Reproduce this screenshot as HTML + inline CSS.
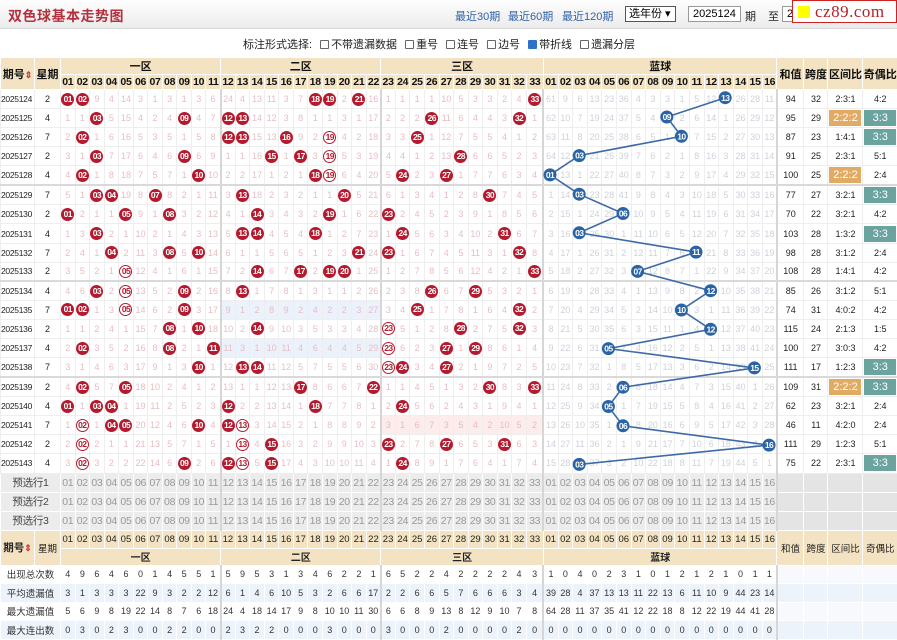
<!DOCTYPE html>
<html><head><meta charset="utf-8">
<style>
*{box-sizing:border-box}
body{margin:0;width:897px;height:640px;overflow:hidden;background:#fff;font-family:"Liberation Sans","Noto Sans CJK SC",sans-serif;position:relative}
#top{position:absolute;left:0;top:0;width:897px;height:29px;background:linear-gradient(#fdfdfd,#ececec);border-bottom:1px solid #d8d8d8}
#title{position:absolute;left:8px;top:6px;font-size:14px;font-weight:bold;color:#b5303c;letter-spacing:0.5px}
.lk{position:absolute;top:8px;font-size:11px;color:#2f62a8}
#sel{position:absolute;left:625px;top:6px;width:51px;height:16px;border:1px solid #555;font-size:11px;line-height:14px;padding-left:3px;background:#fff}
#inp{position:absolute;left:688px;top:6px;width:53px;height:16px;border:1px solid #999;font-size:11px;line-height:14px;padding-left:4px;background:#fff}
#inp2{position:absolute;left:782px;top:6px;width:30px;height:16px;border:1px solid #999;font-size:11px;line-height:14px;padding-left:4px;background:#fff}
.tx{position:absolute;top:8px;font-size:11px;color:#222}
#logo{position:absolute;left:792px;top:0;width:105px;height:23px;border:1px solid #c22;background:#fff}
#logo em{position:absolute;left:5px;top:5px;width:12px;height:12px;background:#ff0;display:block}
#logo span{position:absolute;left:22px;top:1px;font-family:"Liberation Serif",serif;font-size:17px;color:#b5202a;letter-spacing:0.5px}
#flt{position:absolute;left:243px;top:36px;font-size:11px;color:#222;white-space:nowrap}
#flt u{display:inline-block;width:9px;height:9px;border:1px solid #666;border-radius:1px;vertical-align:-1px;margin:0 2px 0 8px;text-decoration:none}
#flt u.c{background:#2d72c8;border-color:#2d72c8}
table{position:absolute;left:0;top:57px;border-collapse:collapse;table-layout:fixed;width:897px}
td{padding:0;text-align:center;font-size:9px;overflow:hidden;white-space:nowrap;border:1px solid #eee}
tr.h td{background:#f3e3c3;border:1px solid #fff;font-weight:bold;color:#111;font-size:11px}
tr.h1 td{height:14px}
tr.h2 td{height:15px;font-size:10.5px;letter-spacing:-0.3px}
tr.d td{height:19.1px;color:#e8bcc0}
tr.d td:nth-child(1){color:#222;text-align:left;padding-left:0;font-size:8.5px;letter-spacing:-0.3px}
tr.d td:nth-child(2){color:#222}
tr.d td:nth-child(n+14):nth-child(-n+24){color:#e6c0c4}
tr.d td:nth-child(n+36):nth-child(-n+51){color:#ccd2db}
tr.d td:nth-child(n+52){color:#222}
tr.d td:nth-child(13),tr.d td:nth-child(24),tr.d td:nth-child(35),tr.p td:nth-child(12),tr.p td:nth-child(23),tr.p td:nth-child(34),tr.s td:nth-child(12),tr.s td:nth-child(23),tr.s td:nth-child(34){border-right:2px solid #d6d6d6}
tr.d td:nth-child(51),tr.p td:nth-child(50),tr.s td:nth-child(50){border-right:2px solid #d6d6d6}
tr.d.b5 td{border-bottom:2px solid #d9d9d9}
tr.hb td:nth-child(n+14):nth-child(-n+24){background:#ebf2fb}
tr.hr td:nth-child(n+25):nth-child(-n+35){background:#fcecec}
b,i{display:inline-block;width:13px;height:13px;border-radius:50%;font-size:8.5px;line-height:13px;font-weight:bold;letter-spacing:-0.6px;font-style:normal;vertical-align:middle}
b{background:#b41a2e;color:#fff}
i{background:#fff;border:1px solid #b41a2e;color:#b41a2e;line-height:11px}
s{display:block;text-decoration:none;color:#fff;font-size:11px;margin:1px 1px;line-height:16px}
s.o{background:#e2ab63}
s.t{background:#6ba39f}
tr.p td{height:19px;background:#ececec;color:#999;border:1px solid #fff;font-size:10.5px;letter-spacing:-0.3px}
tr.p td:first-child{color:#444;font-size:10.5px}
tr.p td:nth-child(n+51){background:#e4e4e4}
tr.fh td{background:#f3e3c3;border:1px solid #fff;color:#222;font-size:9.5px}
tr.f1 td{height:18px}
tr.f2 td{height:17px;font-weight:bold;font-size:10px}
tr.s td{height:18.6px;color:#333;border:1px solid #fff;font-size:9px}
tr.s td:first-child{font-size:9.5px;color:#333}
tr.s.a td{background:#fff}
tr.s.l td{background:#edf3fb}
tr.s.a td:nth-child(n+51){background:#f7f9fc}
svg{position:absolute;left:0;top:0}
</style></head><body>
<div id="top">
<div id="title">双色球基本走势图</div>
<span class="lk" style="left:455px">最近30期</span>
<span class="lk" style="left:508px">最近60期</span>
<span class="lk" style="left:562px">最近120期</span>
<div id="sel">选年份 ▾</div>
<div id="inp">2025124</div>
<span class="tx" style="left:745px">期</span>
<span class="tx" style="left:768px">至</span>
<div id="inp2">2</div>
<div id="logo"><em></em><span>cz89.com</span></div>
</div>
<div id="flt">标注形式选择:<u></u>不带遗漏数据<u></u>重号<u></u>连号<u></u>边号<u class="c"></u>带折线<u></u>遗漏分层</div>

<table>
<colgroup><col style="width:34px"><col style="width:26px">
<col span="32" style="width:14.55px"><col style="width:17.05px">
<col span="16" style="width:14.6px">
<col style="width:27px"><col style="width:24px"><col style="width:35px"><col style="width:34.6px"></colgroup>
<tr class="h h1"><td rowspan="2">期号<span style="color:#c33;font-size:9px">⇕</span></td><td rowspan="2">星期</td><td colspan="11">一区</td><td colspan="11">二区</td><td colspan="11">三区</td><td colspan="16">蓝球</td><td rowspan="2">和值</td><td rowspan="2">跨度</td><td rowspan="2">区间比</td><td rowspan="2">奇偶比</td></tr>
<tr class="h h2"><td>01<td>02<td>03<td>04<td>05<td>06<td>07<td>08<td>09<td>10<td>11<td>12<td>13<td>14<td>15<td>16<td>17<td>18<td>19<td>20<td>21<td>22<td>23<td>24<td>25<td>26<td>27<td>28<td>29<td>30<td>31<td>32<td>33<td>01<td>02<td>03<td>04<td>05<td>06<td>07<td>08<td>09<td>10<td>11<td>12<td>13<td>14<td>15<td>16</tr>

<tr class="d"><td>2025124<td>2<td><b>01</b><td><b>02</b><td>9<td>4<td>14<td>3<td>1<td>3<td>1<td>3<td>6<td>24<td>4<td>13<td>11<td>3<td>7<td><b>18</b><td><b>19</b><td>2<td><b>21</b><td>16<td>1<td>1<td>1<td>1<td>10<td>5<td>3<td>3<td>2<td>4<td><b>33</b><td>61<td>9<td>6<td>13<td>23<td>36<td>4<td>3<td>3<td>1<td>5<td>12<td><td>26<td>28<td>11<td>94<td>32<td>2:3:1<td>4:2</tr>
<tr class="d"><td>2025125<td>4<td>1<td>1<td><b>03</b><td>5<td>15<td>4<td>2<td>4<td><b>09</b><td>4<td>7<td><b>12</b><td><b>13</b><td>14<td>12<td>3<td>8<td>1<td>1<td>3<td>1<td>17<td>2<td>2<td>2<td><b>26</b><td>11<td>6<td>4<td>4<td>3<td><b>32</b><td>1<td>62<td>10<td>7<td>19<td>24<td>37<td>5<td>4<td><td>2<td>6<td>14<td>1<td>26<td>29<td>12<td>95<td>29<td><s class="o">2:2:2</s><td><s class="t">3:3</s></tr>
<tr class="d"><td>2025126<td>7<td>2<td><b>02</b><td>1<td>6<td>16<td>5<td>3<td>5<td>1<td>5<td>8<td><b>12</b><td><b>13</b><td>15<td>13<td><b>16</b><td>9<td>2<td><i>19</i><td>4<td>2<td>18<td>3<td>3<td><b>25</b><td>1<td>12<td>7<td>5<td>5<td>4<td>1<td>2<td>63<td>11<td>8<td>20<td>25<td>38<td>6<td>5<td>1<td><td>7<td>15<td>2<td>27<td>30<td>13<td>87<td>23<td>1:4:1<td><s class="t">3:3</s></tr>
<tr class="d"><td>2025127<td>2<td>3<td>1<td><b>03</b><td>7<td>17<td>6<td>4<td>6<td><b>09</b><td>6<td>9<td>1<td>1<td>16<td><b>15</b><td>1<td><b>17</b><td>3<td><i>19</i><td>5<td>3<td>19<td>4<td>4<td>1<td>2<td>13<td><b>28</b><td>6<td>6<td>5<td>2<td>3<td>64<td>12<td><td>21<td>26<td>39<td>7<td>6<td>2<td>1<td>8<td>16<td>3<td>28<td>31<td>14<td>91<td>25<td>2:3:1<td>5:1</tr>
<tr class="d b5"><td>2025128<td>4<td>4<td><b>02</b><td>1<td>8<td>18<td>7<td>5<td>7<td>1<td><b>10</b><td>10<td>2<td>2<td>17<td>1<td>2<td>1<td><b>18</b><td><i>19</i><td>6<td>4<td>20<td>5<td><b>24</b><td>2<td>3<td><b>27</b><td>1<td>7<td>7<td>6<td>3<td>4<td><td>13<td>1<td>22<td>27<td>40<td>8<td>7<td>3<td>2<td>9<td>17<td>4<td>29<td>32<td>15<td>100<td>25<td><s class="o">2:2:2</s><td>2:4</tr>
<tr class="d"><td>2025129<td>7<td>5<td>1<td><b>03</b><td><b>04</b><td>19<td>8<td><b>07</b><td>8<td>2<td>1<td>11<td>3<td><b>13</b><td>18<td>2<td>3<td>2<td>1<td>1<td><b>20</b><td>5<td>21<td>6<td>1<td>3<td>4<td>1<td>2<td>8<td><b>30</b><td>7<td>4<td>5<td>1<td>14<td><td>23<td>28<td>41<td>9<td>8<td>4<td>3<td>10<td>18<td>5<td>30<td>33<td>16<td>77<td>27<td>3:2:1<td><s class="t">3:3</s></tr>
<tr class="d"><td>2025130<td>2<td><b>01</b><td>2<td>1<td>1<td><b>05</b><td>9<td>1<td><b>08</b><td>3<td>2<td>12<td>4<td>1<td><b>14</b><td>3<td>4<td>3<td>2<td><b>19</b><td>1<td>6<td>22<td><b>23</b><td>2<td>4<td>5<td>2<td>3<td>9<td>1<td>8<td>5<td>6<td>2<td>15<td>1<td>24<td>29<td><td>10<td>9<td>5<td>4<td>11<td>19<td>6<td>31<td>34<td>17<td>70<td>22<td>3:2:1<td>4:2</tr>
<tr class="d"><td>2025131<td>4<td>1<td>3<td><b>03</b><td>2<td>1<td>10<td>2<td>1<td>4<td>3<td>13<td>5<td><b>13</b><td><b>14</b><td>4<td>5<td>4<td><b>18</b><td>1<td>2<td>7<td>23<td>1<td><b>24</b><td>5<td>6<td>3<td>4<td>10<td>2<td><b>31</b><td>6<td>7<td>3<td>16<td><td>25<td>30<td>1<td>11<td>10<td>6<td>5<td>12<td>20<td>7<td>32<td>35<td>18<td>103<td>28<td>1:3:2<td><s class="t">3:3</s></tr>
<tr class="d"><td>2025132<td>7<td>2<td>4<td>1<td><b>04</b><td>2<td>11<td>3<td><b>08</b><td>5<td><b>10</b><td>14<td>6<td>1<td>1<td>5<td>6<td>5<td>1<td>2<td>3<td><b>21</b><td>24<td><b>23</b><td>1<td>6<td>7<td>4<td>5<td>11<td>3<td>1<td><b>32</b><td>8<td>4<td>17<td>1<td>26<td>31<td>2<td>12<td>11<td>7<td>6<td><td>21<td>8<td>33<td>36<td>19<td>98<td>28<td>3:1:2<td>2:4</tr>
<tr class="d b5"><td>2025133<td>2<td>3<td>5<td>2<td>1<td><i>05</i><td>12<td>4<td>1<td>6<td>1<td>15<td>7<td>2<td><b>14</b><td>6<td>7<td><b>17</b><td>2<td><b>19</b><td><b>20</b><td>1<td>25<td>1<td>2<td>7<td>8<td>5<td>6<td>12<td>4<td>2<td>1<td><b>33</b><td>5<td>18<td>2<td>27<td>32<td>3<td><td>12<td>8<td>7<td>1<td>22<td>9<td>34<td>37<td>20<td>108<td>28<td>1:4:1<td>4:2</tr>
<tr class="d"><td>2025134<td>4<td>4<td>6<td><b>03</b><td>2<td><i>05</i><td>13<td>5<td>2<td><b>09</b><td>2<td>16<td>8<td><b>13</b><td>1<td>7<td>8<td>1<td>3<td>1<td>1<td>2<td>26<td>2<td>3<td>8<td><b>26</b><td>6<td>7<td><b>29</b><td>5<td>3<td>2<td>1<td>6<td>19<td>3<td>28<td>33<td>4<td>1<td>13<td>9<td>8<td>2<td><td>10<td>35<td>38<td>21<td>85<td>26<td>3:1:2<td>5:1</tr>
<tr class="d hb"><td>2025135<td>7<td><b>01</b><td><b>02</b><td>1<td>3<td><i>05</i><td>14<td>6<td>2<td><b>09</b><td>3<td>17<td>9<td>1<td>2<td>8<td>9<td>2<td>4<td>2<td>2<td>3<td>27<td>3<td>4<td><b>25</b><td>1<td>7<td>8<td>1<td>6<td>4<td><b>32</b><td>2<td>7<td>20<td>4<td>29<td>34<td>5<td>2<td>14<td>10<td><td>3<td>1<td>11<td>36<td>39<td>22<td>74<td>31<td>4:0:2<td>4:2</tr>
<tr class="d"><td>2025136<td>2<td>1<td>1<td>2<td>4<td>1<td>15<td>7<td><b>08</b><td>1<td><b>10</b><td>18<td>10<td>2<td><b>14</b><td>9<td>10<td>3<td>5<td>3<td>3<td>4<td>28<td><i>23</i><td>5<td>1<td>2<td>8<td><b>28</b><td>2<td>7<td>5<td><b>32</b><td>3<td>8<td>21<td>5<td>30<td>35<td>6<td>3<td>15<td>11<td>1<td>4<td><td>12<td>37<td>40<td>23<td>115<td>24<td>2:1:3<td>1:5</tr>
<tr class="d hb"><td>2025137<td>4<td>2<td><b>02</b><td>3<td>5<td>2<td>16<td>8<td><b>08</b><td>2<td>1<td><b>11</b><td>11<td>3<td>1<td>10<td>11<td>4<td>6<td>4<td>4<td>5<td>29<td><i>23</i><td>6<td>2<td>3<td><b>27</b><td>1<td><b>29</b><td>8<td>6<td>1<td>4<td>9<td>22<td>6<td>31<td><td>7<td>4<td>16<td>12<td>2<td>5<td>1<td>13<td>38<td>41<td>24<td>100<td>27<td>3:0:3<td>4:2</tr>
<tr class="d b5"><td>2025138<td>7<td>3<td>1<td>4<td>6<td>3<td>17<td>9<td>1<td>3<td><b>10</b><td>1<td>12<td><b>13</b><td><b>14</b><td>11<td>12<td>5<td>7<td>5<td>5<td>6<td>30<td><i>23</i><td><b>24</b><td>3<td>4<td><b>27</b><td>2<td>1<td>9<td>7<td>2<td>5<td>10<td>23<td>7<td>32<td>1<td>8<td>5<td>17<td>13<td>3<td>6<td>2<td>14<td>39<td><td>25<td>111<td>17<td>1:2:3<td><s class="t">3:3</s></tr>
<tr class="d"><td>2025139<td>2<td>4<td><b>02</b><td>5<td>7<td><b>05</b><td>18<td>10<td>2<td>4<td>1<td>2<td>13<td>1<td>1<td>12<td>13<td><b>17</b><td>8<td>6<td>6<td>7<td><b>22</b><td>1<td>1<td>4<td>5<td>1<td>3<td>2<td><b>30</b><td>8<td>3<td><b>33</b><td>11<td>24<td>8<td>33<td>2<td><td>6<td>18<td>14<td>4<td>7<td>3<td>15<td>40<td>1<td>26<td>109<td>31<td><s class="o">2:2:2</s><td><s class="t">3:3</s></tr>
<tr class="d"><td>2025140<td>4<td><b>01</b><td>1<td><b>03</b><td><b>04</b><td>1<td>19<td>11<td>2<td>5<td>2<td>3<td><b>12</b><td>2<td>2<td>13<td>14<td>1<td><b>18</b><td>7<td>7<td>8<td>1<td>2<td><b>24</b><td>5<td>6<td>2<td>4<td>3<td>1<td>9<td>4<td>1<td>12<td>25<td>9<td>34<td><td>1<td>7<td>19<td>15<td>5<td>8<td>4<td>16<td>41<td>2<td>27<td>62<td>23<td>3:2:1<td>2:4</tr>
<tr class="d hr"><td>2025141<td>7<td>1<td><i>02</i><td>1<td><b>04</b><td><b>05</b><td>20<td>12<td>4<td>6<td><b>10</b><td>4<td><b>12</b><td><i>13</i><td>3<td>14<td>15<td>2<td>1<td>8<td>8<td>9<td>2<td>3<td>1<td>6<td>7<td>3<td>5<td>4<td>2<td>10<td>5<td>2<td>13<td>26<td>10<td>35<td>1<td><td>8<td>20<td>16<td>6<td>9<td>5<td>17<td>42<td>3<td>28<td>46<td>11<td>4:2:0<td>2:4</tr>
<tr class="d"><td>2025142<td>2<td>2<td><i>02</i><td>2<td>1<td>1<td>21<td>13<td>5<td>7<td>1<td>5<td>1<td><i>13</i><td>4<td><b>15</b><td>16<td>3<td>2<td>9<td>9<td>10<td>3<td><b>23</b><td>2<td>7<td>8<td><b>27</b><td>6<td>5<td>3<td><b>31</b><td>6<td>3<td>14<td>27<td>11<td>36<td>2<td>1<td>9<td>21<td>17<td>7<td>10<td>6<td>18<td>43<td>4<td><td>111<td>29<td>1:2:3<td>5:1</tr>
<tr class="d"><td>2025143<td>4<td>3<td><i>02</i><td>3<td>2<td>2<td>22<td>14<td>6<td><b>09</b><td>2<td>6<td><b>12</b><td><i>13</i><td>5<td><b>15</b><td>17<td>4<td>3<td>10<td>10<td>11<td>4<td>1<td><b>24</b><td>8<td>9<td>1<td>7<td>6<td>4<td>1<td>7<td>4<td>15<td>28<td><td>37<td>3<td>2<td>10<td>22<td>18<td>8<td>11<td>7<td>19<td>44<td>5<td>1<td>75<td>22<td>2:3:1<td><s class="t">3:3</s></tr>

<tr class="p"><td colspan="2">预选行1<td>01<td>02<td>03<td>04<td>05<td>06<td>07<td>08<td>09<td>10<td>11<td>12<td>13<td>14<td>15<td>16<td>17<td>18<td>19<td>20<td>21<td>22<td>23<td>24<td>25<td>26<td>27<td>28<td>29<td>30<td>31<td>32<td>33<td>01<td>02<td>03<td>04<td>05<td>06<td>07<td>08<td>09<td>10<td>11<td>12<td>13<td>14<td>15<td>16<td><td><td><td></tr>
<tr class="p"><td colspan="2">预选行2<td>01<td>02<td>03<td>04<td>05<td>06<td>07<td>08<td>09<td>10<td>11<td>12<td>13<td>14<td>15<td>16<td>17<td>18<td>19<td>20<td>21<td>22<td>23<td>24<td>25<td>26<td>27<td>28<td>29<td>30<td>31<td>32<td>33<td>01<td>02<td>03<td>04<td>05<td>06<td>07<td>08<td>09<td>10<td>11<td>12<td>13<td>14<td>15<td>16<td><td><td><td></tr>
<tr class="p"><td colspan="2">预选行3<td>01<td>02<td>03<td>04<td>05<td>06<td>07<td>08<td>09<td>10<td>11<td>12<td>13<td>14<td>15<td>16<td>17<td>18<td>19<td>20<td>21<td>22<td>23<td>24<td>25<td>26<td>27<td>28<td>29<td>30<td>31<td>32<td>33<td>01<td>02<td>03<td>04<td>05<td>06<td>07<td>08<td>09<td>10<td>11<td>12<td>13<td>14<td>15<td>16<td><td><td><td></tr>

<tr class="fh f1"><td rowspan="2" style="font-weight:bold;font-size:10.5px">期号<span style="color:#c33;font-size:9px">⇕</span></td><td rowspan="2">星期</td><td>01<td>02<td>03<td>04<td>05<td>06<td>07<td>08<td>09<td>10<td>11<td>12<td>13<td>14<td>15<td>16<td>17<td>18<td>19<td>20<td>21<td>22<td>23<td>24<td>25<td>26<td>27<td>28<td>29<td>30<td>31<td>32<td>33<td>01<td>02<td>03<td>04<td>05<td>06<td>07<td>08<td>09<td>10<td>11<td>12<td>13<td>14<td>15<td>16<td rowspan="2">和值</td><td rowspan="2">跨度</td><td rowspan="2">区间比</td><td rowspan="2">奇偶比</td></tr>
<tr class="fh f2"><td colspan="11">一区</td><td colspan="11">二区</td><td colspan="11">三区</td><td colspan="16">蓝球</td></tr>

<tr class="s a"><td colspan="2">出现总次数<td>4<td>9<td>6<td>4<td>6<td>0<td>1<td>4<td>5<td>5<td>1<td>5<td>9<td>5<td>3<td>1<td>3<td>4<td>6<td>2<td>2<td>1<td>6<td>5<td>2<td>2<td>4<td>2<td>2<td>2<td>2<td>4<td>3<td>1<td>0<td>4<td>0<td>2<td>3<td>1<td>0<td>1<td>2<td>1<td>2<td>1<td>0<td>1<td>1<td><td><td><td></tr>
<tr class="s l"><td colspan="2">平均遗漏值<td>3<td>1<td>3<td>3<td>3<td>22<td>9<td>3<td>2<td>2<td>12<td>6<td>1<td>4<td>6<td>10<td>5<td>3<td>2<td>6<td>6<td>17<td>2<td>2<td>6<td>6<td>5<td>7<td>6<td>6<td>6<td>3<td>4<td>39<td>28<td>4<td>37<td>13<td>13<td>11<td>22<td>13<td>6<td>11<td>10<td>9<td>44<td>23<td>14<td><td><td><td></tr>
<tr class="s a"><td colspan="2">最大遗漏值<td>5<td>6<td>9<td>8<td>19<td>22<td>14<td>8<td>7<td>6<td>18<td>24<td>4<td>18<td>14<td>17<td>9<td>8<td>10<td>10<td>11<td>30<td>6<td>6<td>8<td>9<td>13<td>8<td>12<td>9<td>10<td>7<td>8<td>64<td>28<td>11<td>37<td>35<td>41<td>12<td>22<td>18<td>8<td>12<td>22<td>19<td>44<td>41<td>28<td><td><td><td></tr>
<tr class="s l"><td colspan="2">最大连出数<td>0<td>3<td>0<td>2<td>3<td>0<td>0<td>2<td>2<td>0<td>0<td>2<td>3<td>2<td>2<td>0<td>0<td>0<td>3<td>0<td>0<td>0<td>3<td>0<td>0<td>0<td>2<td>0<td>0<td>0<td>0<td>2<td>0<td>0<td>0<td>0<td>0<td>0<td>0<td>0<td>0<td>0<td>0<td>0<td>0<td>0<td>0<td>0<td>0<td><td><td><td></tr>
</table>

<svg width="897" height="640" viewBox="0 0 897 640">
<polyline fill="none" stroke="#3d6aa6" stroke-width="1.6" points="725.2,97.7 666.8,117 681.4,136.3 579.2,155.6 550,174.9 579.2,194.2 623,213.5 579.2,232.8 696,252.1 637.6,271.4 710.6,290.7 681.4,310 710.6,329.3 608.4,348.6 754.4,367.9 623,387.2 608.4,406.5 623,425.8 769,445.1 579.2,464.4"/>
<g fill="#2a64a4">
<circle cx="725.2" cy="97.7" r="6.5"/><circle cx="666.8" cy="117" r="6.5"/><circle cx="681.4" cy="136.3" r="6.5"/><circle cx="579.2" cy="155.6" r="6.5"/><circle cx="550" cy="174.9" r="6.5"/><circle cx="579.2" cy="194.2" r="6.5"/><circle cx="623" cy="213.5" r="6.5"/><circle cx="579.2" cy="232.8" r="6.5"/><circle cx="696" cy="252.1" r="6.5"/><circle cx="637.6" cy="271.4" r="6.5"/><circle cx="710.6" cy="290.7" r="6.5"/><circle cx="681.4" cy="310" r="6.5"/><circle cx="710.6" cy="329.3" r="6.5"/><circle cx="608.4" cy="348.6" r="6.5"/><circle cx="754.4" cy="367.9" r="6.5"/><circle cx="623" cy="387.2" r="6.5"/><circle cx="608.4" cy="406.5" r="6.5"/><circle cx="623" cy="425.8" r="6.5"/><circle cx="769" cy="445.1" r="6.5"/><circle cx="579.2" cy="464.4" r="6.5"/>
</g>
<g fill="#fff" font-family="Liberation Sans, sans-serif" font-size="8.5" font-weight="bold" text-anchor="middle" letter-spacing="-0.6">
<text x="725.2" y="100.8">13</text><text x="666.8" y="120.1">09</text><text x="681.4" y="139.4">10</text><text x="579.2" y="158.7">03</text><text x="550" y="178">01</text><text x="579.2" y="197.3">03</text><text x="623" y="216.6">06</text><text x="579.2" y="235.9">03</text><text x="696" y="255.2">11</text><text x="637.6" y="274.5">07</text><text x="710.6" y="293.8">12</text><text x="681.4" y="313.1">10</text><text x="710.6" y="332.4">12</text><text x="608.4" y="351.7">05</text><text x="754.4" y="371">15</text><text x="623" y="390.3">06</text><text x="608.4" y="409.6">05</text><text x="623" y="428.9">06</text><text x="769" y="448.2">16</text><text x="579.2" y="467.5">03</text>
</g>
</svg>
</body></html>
